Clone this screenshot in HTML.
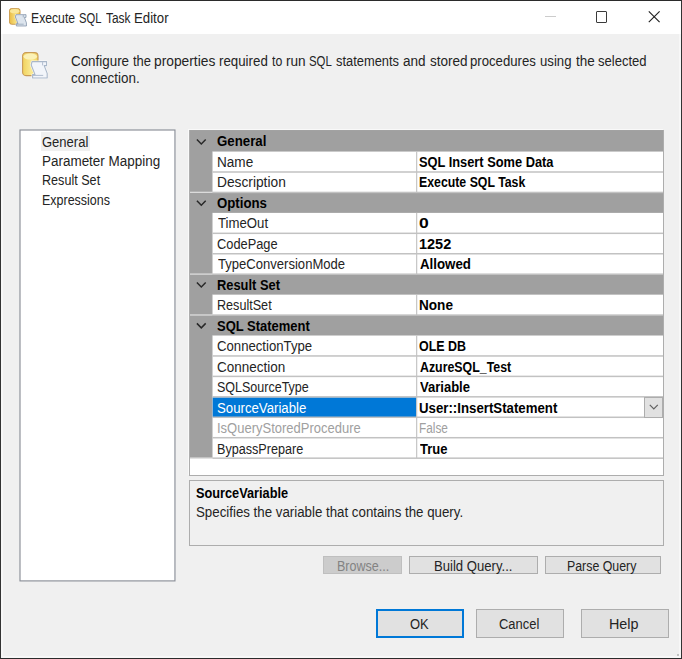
<!DOCTYPE html>
<html><head><meta charset="utf-8"><title>Execute SQL Task Editor</title>
<style>
html,body{margin:0;padding:0;background:#f0f0f0;}
body{width:682px;height:659px;overflow:hidden;position:relative;font-family:"Liberation Sans",sans-serif;}
#win{position:absolute;left:0;top:0;width:682px;height:659px;background:#f0f0f0;overflow:hidden;}
#win div,#win svg,#win span{position:absolute;}
#frame{left:0;top:0;width:680px;height:657px;border:1px solid #333;border-top-color:#2b2b2b;border-bottom-color:#2b2b2b;border-left-width:1px;z-index:50;pointer-events:none;}
#frame2{left:1px;top:34px;width:676px;height:622px;border:2px solid #f7f7f7;border-top:none;z-index:49;}
#title{left:1px;top:1px;width:680px;height:33px;background:#fff;}
.t{font-size:14px;line-height:18px;height:18px;white-space:pre;transform-origin:0 50%;color:#242424;z-index:10;}
.b{font-weight:bold;color:#000;}
#treesel{z-index:2;left:41px;top:132px;width:49px;height:19px;background:#f0f0f0;}
#grid{left:189px;top:130px;width:473px;height:344px;background:#fff;border:1px solid #adadad;box-shadow:-1px -1px 0 #f9f9f9;}
#dd{left:644px;top:397px;width:17px;height:19px;background:#e1e1e1;border:1px solid #adadad;z-index:6;}
#desc{left:189px;top:480px;width:473px;height:64px;border:1px solid #adadad;background:#f0f0f0;}
.btn{background:#e1e1e1;border:1px solid #adadad;box-sizing:border-box;}
</style></head>
<body>
<div id="win">
<div id="title"></div>
<svg style="left:9px;top:8px;z-index:8" width="18" height="18.7" viewBox="0 0 26 27">
<defs><linearGradient id="gd" x1="0" y1="0" x2="1" y2="0"><stop offset="0" stop-color="#e9bb45"/><stop offset="0.55" stop-color="#f6de7c"/><stop offset="1" stop-color="#e9bb45"/></linearGradient></defs>
<rect x="0.6" y="0.6" width="15.4" height="23" rx="3.4" ry="3.4" fill="url(#gd)" stroke="#c08a3c" stroke-width="1.1"/>
<ellipse cx="8.3" cy="4.6" rx="6.8" ry="3" fill="#f9e79b"/>
<path d="M10 9.6 H24.6 V13.6 H22.2 L25.2 21.4 V26 H10.6 V22.6 H13 L9.2 13 Z" fill="#ffffff" stroke="#ffffff" stroke-width="2.2" stroke-linejoin="round" opacity="0.85"/>
<path d="M10 9.6 H24.6 V13.6 H22.2 L25.2 21.4 V26 H10.6 V22.6 H13 L9.2 13 Z" fill="#dde5ee" stroke="#8091a8" stroke-width="1.1" stroke-linejoin="round"/>
<path d="M20.6 10.2 V13.4 M11 23.4 H21.2" fill="none" stroke="#8091a8" stroke-width="0.9"/>
</svg>
<div style="left:545px;top:16px;width:11px;height:1px;background:#cccccc"></div>
<div style="left:596px;top:11px;width:9px;height:10px;border:1px solid #3a3a3a;border-radius:1px"></div>
<svg style="left:646px;top:9px" width="16" height="16" viewBox="0 0 16 16"><path d="M2.8 2.3 L13.6 13.1 M13.6 2.3 L2.8 13.1" stroke="#222" stroke-width="1.15" fill="none"/></svg>
<svg style="left:22px;top:52px;z-index:8" width="26" height="27" viewBox="0 0 26 27">
<defs><linearGradient id="gl" x1="0" y1="0" x2="1" y2="0"><stop offset="0" stop-color="#f1d25c"/><stop offset="0.55" stop-color="#f9e993"/><stop offset="1" stop-color="#f1d25c"/></linearGradient></defs>
<rect x="0.6" y="0.6" width="15.4" height="23" rx="3.4" ry="3.4" fill="url(#gl)" stroke="#c99b56" stroke-width="1.1"/>
<ellipse cx="8.3" cy="4.6" rx="6.8" ry="3" fill="#fbf1b6"/>
<path d="M10 9.6 H24.6 V13.6 H22.2 L25.2 21.4 V26 H10.6 V22.6 H13 L9.2 13 Z" fill="#ffffff" stroke="#ffffff" stroke-width="2.2" stroke-linejoin="round" opacity="0.85"/>
<path d="M10 9.6 H24.6 V13.6 H22.2 L25.2 21.4 V26 H10.6 V22.6 H13 L9.2 13 Z" fill="#f2f5fa" stroke="#a9b7c9" stroke-width="1.1" stroke-linejoin="round"/>
<path d="M20.6 10.2 V13.4 M11 23.4 H21.2" fill="none" stroke="#a9b7c9" stroke-width="0.9"/>
</svg>
<svg style="left:0;top:0;z-index:1" width="200" height="600" viewBox="0 0 200 600"><rect x="20" y="130" width="154.95" height="450.9" fill="#fff" stroke="#8b8f98" stroke-width="1.15"/></svg><div id="treesel"></div>
<div id="grid"></div>
<svg style="left:0;top:0;z-index:2" width="682" height="659" viewBox="0 0 682 659"><rect x="190" y="130.2" width="473.0" height="327.96" fill="#a0a0a0"/><rect x="212.4" y="151.56" width="450.6" height="20.44" fill="#fff"/><rect x="212.4" y="172.00" width="450.6" height="20.44" fill="#fff"/><rect x="212.4" y="212.88" width="450.6" height="20.44" fill="#fff"/><rect x="212.4" y="233.32" width="450.6" height="20.44" fill="#fff"/><rect x="212.4" y="253.76" width="450.6" height="20.44" fill="#fff"/><rect x="212.4" y="294.64" width="450.6" height="20.44" fill="#fff"/><rect x="212.4" y="335.52" width="450.6" height="20.44" fill="#fff"/><rect x="212.4" y="355.96" width="450.6" height="20.44" fill="#fff"/><rect x="212.4" y="376.40" width="450.6" height="20.44" fill="#fff"/><rect x="212.4" y="396.84" width="450.6" height="20.44" fill="#fff"/><rect x="212.4" y="397.34" width="203.8" height="20.04" fill="#0078d7"/><rect x="212.4" y="417.28" width="450.6" height="20.44" fill="#fff"/><rect x="212.4" y="437.72" width="450.6" height="20.44" fill="#fff"/><rect x="212.4" y="171.25" width="450.6" height="1.5" fill="#c2c2c2"/><rect x="416.10" y="151.56" width="1.15" height="20.44" fill="#c2c2c2"/><rect x="211.90" y="151.56" width="1" height="20.44" fill="#c8c8c8" opacity="0.6"/><rect x="212.4" y="191.69" width="450.6" height="1.5" fill="#c2c2c2"/><rect x="416.10" y="172.00" width="1.15" height="20.44" fill="#c2c2c2"/><rect x="211.90" y="172.00" width="1" height="20.44" fill="#c8c8c8" opacity="0.6"/><rect x="212.4" y="232.57" width="450.6" height="1.5" fill="#c2c2c2"/><rect x="416.10" y="212.88" width="1.15" height="20.44" fill="#c2c2c2"/><rect x="211.90" y="212.88" width="1" height="20.44" fill="#c8c8c8" opacity="0.6"/><rect x="212.4" y="253.01" width="450.6" height="1.5" fill="#c2c2c2"/><rect x="416.10" y="233.32" width="1.15" height="20.44" fill="#c2c2c2"/><rect x="211.90" y="233.32" width="1" height="20.44" fill="#c8c8c8" opacity="0.6"/><rect x="212.4" y="273.45" width="450.6" height="1.5" fill="#c2c2c2"/><rect x="416.10" y="253.76" width="1.15" height="20.44" fill="#c2c2c2"/><rect x="211.90" y="253.76" width="1" height="20.44" fill="#c8c8c8" opacity="0.6"/><rect x="212.4" y="314.33" width="450.6" height="1.5" fill="#c2c2c2"/><rect x="416.10" y="294.64" width="1.15" height="20.44" fill="#c2c2c2"/><rect x="211.90" y="294.64" width="1" height="20.44" fill="#c8c8c8" opacity="0.6"/><rect x="212.4" y="355.21" width="450.6" height="1.5" fill="#c2c2c2"/><rect x="416.10" y="335.52" width="1.15" height="20.44" fill="#c2c2c2"/><rect x="211.90" y="335.52" width="1" height="20.44" fill="#c8c8c8" opacity="0.6"/><rect x="212.4" y="375.65" width="450.6" height="1.5" fill="#c2c2c2"/><rect x="416.10" y="355.96" width="1.15" height="20.44" fill="#c2c2c2"/><rect x="211.90" y="355.96" width="1" height="20.44" fill="#c8c8c8" opacity="0.6"/><rect x="212.4" y="396.09" width="450.6" height="1.5" fill="#c2c2c2"/><rect x="416.10" y="376.40" width="1.15" height="20.44" fill="#c2c2c2"/><rect x="211.90" y="376.40" width="1" height="20.44" fill="#c8c8c8" opacity="0.6"/><rect x="212.4" y="416.53" width="450.6" height="1.5" fill="#c2c2c2"/><rect x="416.10" y="396.84" width="1.15" height="20.44" fill="#c2c2c2"/><rect x="211.90" y="396.84" width="1" height="20.44" fill="#c8c8c8" opacity="0.6"/><rect x="212.4" y="436.97" width="450.6" height="1.5" fill="#c2c2c2"/><rect x="416.10" y="417.28" width="1.15" height="20.44" fill="#c2c2c2"/><rect x="211.90" y="417.28" width="1" height="20.44" fill="#c8c8c8" opacity="0.6"/><rect x="212.4" y="457.41" width="450.6" height="1.5" fill="#c2c2c2"/><rect x="416.10" y="437.72" width="1.15" height="20.44" fill="#c2c2c2"/><rect x="211.90" y="437.72" width="1" height="20.44" fill="#c8c8c8" opacity="0.6"/><rect x="190" y="191.69" width="22.4" height="1.3" fill="#dcdcdc"/><rect x="190" y="273.45" width="22.4" height="1.3" fill="#dcdcdc"/><rect x="190" y="314.33" width="22.4" height="1.3" fill="#dcdcdc"/><rect x="190" y="457.41" width="22.4" height="1.3" fill="#dcdcdc"/><path d="M196.9 139.42 L201.3 143.92 L205.7 139.42" fill="none" stroke="#282828" stroke-width="1.45"/><path d="M196.9 200.74 L201.3 205.24 L205.7 200.74" fill="none" stroke="#282828" stroke-width="1.45"/><path d="M196.9 282.50 L201.3 287.00 L205.7 282.50" fill="none" stroke="#282828" stroke-width="1.45"/><path d="M196.9 323.38 L201.3 327.88 L205.7 323.38" fill="none" stroke="#282828" stroke-width="1.45"/></svg>
<div id="dd"></div>
<svg style="left:647px;top:401px;z-index:7" width="14" height="12" viewBox="0 0 14 12"><path d="M2.8 3.8 L6.8 7.8 L10.8 3.8" fill="none" stroke="#606060" stroke-width="1.2"/></svg>
<div id="desc"></div>
<div class="btn" style="left:323px;top:556px;width:79px;height:18px;background:#cccccc;border-color:#bfbfbf"></div>
<div class="btn" style="left:409px;top:556px;width:129px;height:18px"></div>
<div class="btn" style="left:545px;top:556px;width:115.5px;height:18px"></div>
<div class="btn" style="left:376px;top:609px;width:88px;height:29px;border:2px solid #0078d7"></div>
<div class="btn" style="left:476px;top:609px;width:88px;height:29px"></div>
<div class="btn" style="left:580.5px;top:609px;width:88px;height:29px"></div>
<span class="t" style="left:31.13px;top:8.75px;transform:scaleX(0.8714)">Execute</span>
<span class="t" style="left:79.30px;top:8.75px;transform:scaleX(0.8000)">SQL</span>
<span class="t" style="left:105.90px;top:8.75px;transform:scaleX(0.8517)">Task</span>
<span class="t" style="left:134.36px;top:8.75px;transform:scaleX(0.9444)">Editor</span>
<span class="t" style="left:70.64px;top:51.85px;transform:scaleX(0.9559)">Configure</span>
<span class="t" style="left:133.00px;top:51.85px;transform:scaleX(0.9263)">the</span>
<span class="t" style="left:154.31px;top:51.85px;transform:scaleX(0.9852)">properties</span>
<span class="t" style="left:219.35px;top:51.85px;transform:scaleX(0.9500)">required</span>
<span class="t" style="left:272.20px;top:51.85px;transform:scaleX(0.8818)">to</span>
<span class="t" style="left:285.83px;top:51.85px;transform:scaleX(0.9737)">run</span>
<span class="t" style="left:309.49px;top:51.85px;transform:scaleX(0.8148)">SQL</span>
<span class="t" style="left:335.78px;top:51.85px;transform:scaleX(0.9194)">statements</span>
<span class="t" style="left:403.23px;top:51.85px;transform:scaleX(0.9682)">and</span>
<span class="t" style="left:429.53px;top:51.85px;transform:scaleX(0.9676)">stored</span>
<span class="t" style="left:470.26px;top:51.85px;transform:scaleX(0.9406)">procedures</span>
<span class="t" style="left:540.06px;top:51.85px;transform:scaleX(0.9406)">using</span>
<span class="t" style="left:576.10px;top:51.85px;transform:scaleX(0.9632)">the</span>
<span class="t" style="left:598.07px;top:51.85px;transform:scaleX(0.9320)">selected</span>
<span class="t" style="left:70.84px;top:68.55px;transform:scaleX(0.9586)">connection.</span>
<span class="t" style="left:42.27px;top:132.75px;transform:scaleX(0.9292)">General</span>
<span class="t" style="left:42.34px;top:151.95px;transform:scaleX(0.9612)">Parameter Mapping</span>
<span class="t" style="left:42.30px;top:171.45px;transform:scaleX(0.9000)">Result Set</span>
<span class="t" style="left:42.31px;top:191.15px;transform:scaleX(0.8907)">Expressions</span>
<span class="t b" style="left:216.75px;top:132.45px;transform:scaleX(0.9480)">General</span>
<span class="t" style="left:216.53px;top:152.92px;transform:scaleX(0.9694)">Name</span>
<span class="t b" style="left:419.28px;top:152.92px;transform:scaleX(0.9158)">SQL Insert Some Data</span>
<span class="t" style="left:216.52px;top:173.39px;transform:scaleX(0.9824)">Description</span>
<span class="t b" style="left:419.32px;top:173.39px;transform:scaleX(0.8792)">Execute SQL Task</span>
<span class="t b" style="left:216.76px;top:193.86px;transform:scaleX(0.9431)">Options</span>
<span class="t" style="left:217.50px;top:214.33px;transform:scaleX(0.9415)">TimeOut</span>
<span class="t b" style="left:418.95px;top:214.33px;transform:scaleX(1.2500)">0</span>
<span class="t" style="left:216.58px;top:234.80px;transform:scaleX(0.9154)">CodePage</span>
<span class="t b" style="left:419.17px;top:234.80px;transform:scaleX(1.0333)">1252</span>
<span class="t" style="left:217.50px;top:255.27px;transform:scaleX(0.9331)">TypeConversionMode</span>
<span class="t b" style="left:420.20px;top:255.27px;transform:scaleX(0.9491)">Allowed</span>
<span class="t b" style="left:216.78px;top:275.74px;transform:scaleX(0.9194)">Result Set</span>
<span class="t" style="left:216.60px;top:296.21px;transform:scaleX(0.9000)">ResultSet</span>
<span class="t b" style="left:419.23px;top:296.21px;transform:scaleX(0.9706)">None</span>
<span class="t b" style="left:216.77px;top:316.68px;transform:scaleX(0.9273)">SQL Statement</span>
<span class="t" style="left:216.56px;top:337.15px;transform:scaleX(0.9400)">ConnectionType</span>
<span class="t b" style="left:419.31px;top:337.15px;transform:scaleX(0.8882)">OLE DB</span>
<span class="t" style="left:216.54px;top:357.62px;transform:scaleX(0.9638)">Connection</span>
<span class="t b" style="left:420.20px;top:357.62px;transform:scaleX(0.8835)">AzureSQL_Test</span>
<span class="t" style="left:216.61px;top:378.09px;transform:scaleX(0.8931)">SQLSourceType</span>
<span class="t b" style="left:420.20px;top:378.09px;transform:scaleX(0.9302)">Variable</span>
<span class="t" style="left:216.56px;top:398.56px;color:#fff;transform:scaleX(0.9430)">SourceVariable</span>
<span class="t b" style="left:419.25px;top:398.56px;transform:scaleX(0.9455)">User::InsertStatement</span>
<span class="t" style="left:216.57px;top:419.03px;color:#a0a0a0;transform:scaleX(0.9281)">IsQueryStoredProcedure</span>
<span class="t" style="left:419.35px;top:419.03px;color:#a0a0a0;transform:scaleX(0.8455)">False</span>
<span class="t" style="left:216.60px;top:439.50px;transform:scaleX(0.9011)">BypassPrepare</span>
<span class="t b" style="left:420.20px;top:439.50px;transform:scaleX(0.9276)">True</span>
<span class="t b" style="left:195.89px;top:483.95px;transform:scaleX(0.9100)">SourceVariable</span>
<span class="t" style="left:195.85px;top:503.45px;transform:scaleX(0.9491)">Specifies the variable that contains the query.</span>
<span class="t" style="left:336.50px;top:556.75px;color:#838383;transform:scaleX(0.8964)">Browse...</span>
<span class="t" style="left:433.86px;top:556.55px;transform:scaleX(0.9366)">Build Query...</span>
<span class="t" style="left:567.42px;top:556.55px;transform:scaleX(0.8831)">Parse Query</span>
<span class="t" style="left:409.77px;top:614.75px;transform:scaleX(0.9263)">OK</span>
<span class="t" style="left:498.58px;top:614.85px;transform:scaleX(0.9238)">Cancel</span>
<span class="t" style="left:609.27px;top:614.85px;transform:scaleX(1.0259)">Help</span>
<div style="left:676.5px;top:653.5px;width:2px;height:2px;background:#c2c2c2"></div>
<div id="frame2"></div>
<div id="frame"></div>
</div>
</body></html>
